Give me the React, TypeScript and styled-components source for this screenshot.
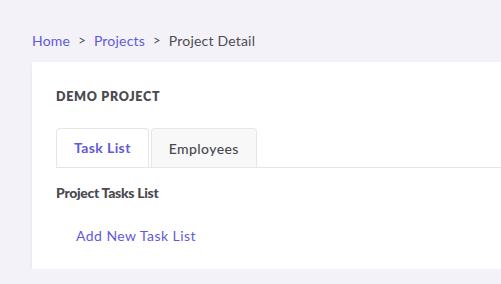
import React from 'react';
import styled, { createGlobalStyle } from 'styled-components';

const GlobalStyle = createGlobalStyle`
  html, body {
    margin: 0;
    padding: 0;
    background: #f3f2f8;
    font-family: Lato, "Noto Sans", sans-serif;
    overflow: hidden;
  }
`;

const Page = styled.div`
  padding: 30px 0 0 32px;
`;

const Breadcrumb = styled.nav`
  display: flex;
  align-items: center;
  gap: 8px;
  font-size: 14px;
  height: 20px;
  color: #4d4d52;
  margin-bottom: 12px;
  letter-spacing: 0.2px;
`;

const Crumb = styled.a`
  color: #5f5bd8;
  text-decoration: none;
`;

const Sep = styled.span`
  color: #4d4d52;
  font-size: 13px;
`;

const Card = styled.section`
  background: #fff;
  box-shadow: 0 2px 4px rgba(40, 40, 80, 0.06);
  padding: 26px 0 23px 24px;
`;

const Title = styled.h1`
  margin: 0 0 22px;
  font-size: 12.5px;
  font-weight: 800;
  color: #4a4a4f;
  letter-spacing: 0.7px;
  line-height: 18px;
`;

const Tabs = styled.div`
  display: flex;
  gap: 2px;
  border-bottom: 1px solid #e6e6ea;
`;

const Tab = styled.button<{ $active?: boolean }>`
  font-family: inherit;
  font-size: 14px;
  letter-spacing: 0.4px;
  font-weight: ${p => (p.$active ? 700 : 500)};
  color: ${p => (p.$active ? '#5f5bd8' : '#4a4a4f')};
  background: ${p => (p.$active ? '#fff' : '#f8f8f9')};
  border: 1px solid #e6e6ea;
  border-bottom: ${p => (p.$active ? '1px solid #fff' : 'none')};
  margin-bottom: ${p => (p.$active ? '-1px' : '0')};
  border-radius: 4px 4px 0 0;
  padding: 0 17px;
  height: 39px;
  cursor: pointer;
`;

const SectionTitle = styled.h2`
  margin: 15px 0 0;
  font-size: 14px;
  font-weight: 900;
  letter-spacing: -0.3px;
  color: #4a4a4f;
  line-height: 20px;
`;

const AddLink = styled.a`
  display: inline-block;
  margin: 23px 0 0 20px;
  font-size: 14px;
  color: #5f5bd8;
  text-decoration: none;
  line-height: 20px;
  letter-spacing: 0.45px;
`;

export default function App() {
  return (
    <>
      <GlobalStyle />
      <Page>
        <Breadcrumb>
          <Crumb href="#">Home</Crumb>
          <Sep>&gt;</Sep>
          <Crumb href="#">Projects</Crumb>
          <Sep>&gt;</Sep>
          <span>Project Detail</span>
        </Breadcrumb>
        <Card>
          <Title>DEMO PROJECT</Title>
          <Tabs>
            <Tab $active>Task List</Tab>
            <Tab>Employees</Tab>
          </Tabs>
          <SectionTitle>Project Tasks List</SectionTitle>
          <AddLink href="#">Add New Task List</AddLink>
        </Card>
      </Page>
    </>
  );
}
